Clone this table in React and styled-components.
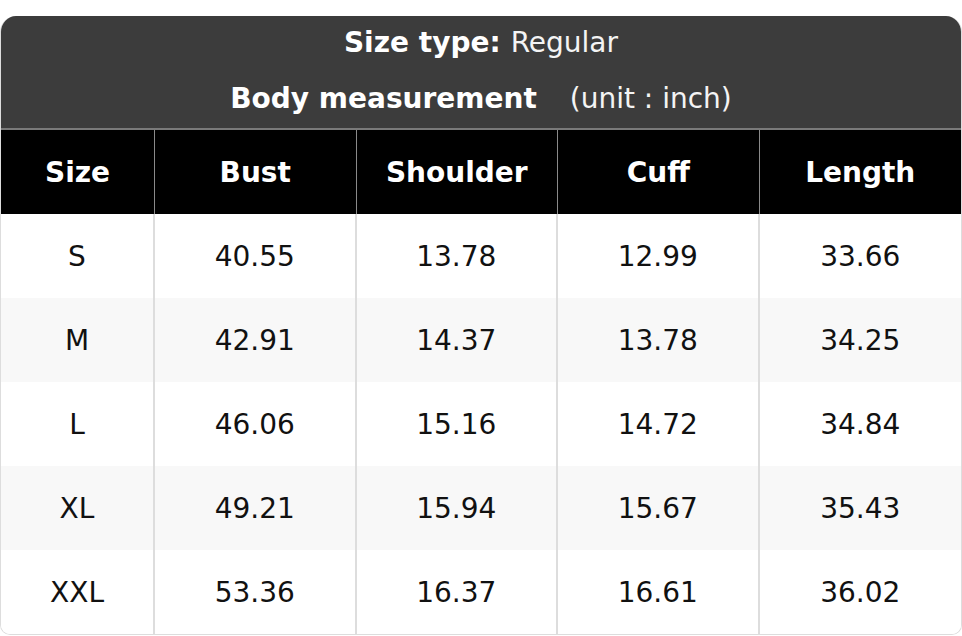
import React from "react";
import styled, { createGlobalStyle } from "styled-components";

const Global = createGlobalStyle`
  html, body { margin: 0; padding: 0; background: #ffffff; }
  body { font-family: "DejaVu Sans", sans-serif; }
`;

const Page = styled.div`
  width: 962px;
  padding-top: 16px;
`;

const Card = styled.div`
  width: 962px;
  box-sizing: border-box;
  border-radius: 16px 16px 10px 10px;
  overflow: hidden;
  border: 1px solid #dddddd;
  border-top: none;
  background: #ffffff;
`;

const TitleBlock = styled.div`
  background: #3c3c3c;
  color: #ffffff;
  display: flex;
  flex-direction: column;
  border-bottom: 2px solid #7a7a7a;
  margin: 0 -1px;
`;

const TitleLine = styled.div`
  height: ${(p) => p.$h}px;
  display: flex;
  align-items: center;
  justify-content: center;
  font-size: 28px;
  gap: ${(p) => p.$gap || "0px"};
`;

const Strong = styled.span`
  font-family: "DejaVu Sans", sans-serif;
  font-weight: bold;
`;

const Light = styled.span`
  font-family: "DejaVu Sans", sans-serif;
  font-weight: normal;
  color: #f4f4f4;
`;

const Grid = styled.div`
  display: grid;
  grid-template-columns: 154px repeat(4, 1fr);
`;

const HeadCell = styled.div`
  height: 84px;
  background: #000000;
  color: #ffffff;
  font-weight: bold;
  font-size: 28px;
  display: flex;
  align-items: center;
  justify-content: center;
  border-right: ${(p) => (p.$last ? "none" : "1px solid #8a8a8a")};
`;

const Cell = styled.div`
  height: 84px;
  background: ${(p) => (p.$alt ? "#f8f8f8" : "#ffffff")};
  color: #111111;
  font-size: 28px;
  display: flex;
  align-items: center;
  justify-content: center;
  border-right: ${(p) => (p.$last ? "none" : "2px solid #dddddd")};
`;

const headers = ["Size", "Bust", "Shoulder", "Cuff", "Length"];
const rows = [
  ["S", "40.55", "13.78", "12.99", "33.66"],
  ["M", "42.91", "14.37", "13.78", "34.25"],
  ["L", "46.06", "15.16", "14.72", "34.84"],
  ["XL", "49.21", "15.94", "15.67", "35.43"],
  ["XXL", "53.36", "16.37", "16.61", "36.02"],
];

export default function App() {
  return (
    <Page>
      <Global />
      <Card>
        <TitleBlock>
          <TitleLine $h={53} $gap="10px">
            <Strong>Size type:</Strong>
            <Light>Regular</Light>
          </TitleLine>
          <TitleLine $h={59} $gap="33px">
            <Strong>Body measurement</Strong>
            <Light>(unit : inch)</Light>
          </TitleLine>
        </TitleBlock>
        <Grid>
          {headers.map((h, i) => (
            <HeadCell key={h} $last={i === headers.length - 1}>
              {h}
            </HeadCell>
          ))}
          {rows.map((r, ri) =>
            r.map((v, ci) => (
              <Cell key={ri + "-" + ci} $alt={ri % 2 === 1} $last={ci === r.length - 1}>
                {v}
              </Cell>
            ))
          )}
        </Grid>
      </Card>
    </Page>
  );
}
